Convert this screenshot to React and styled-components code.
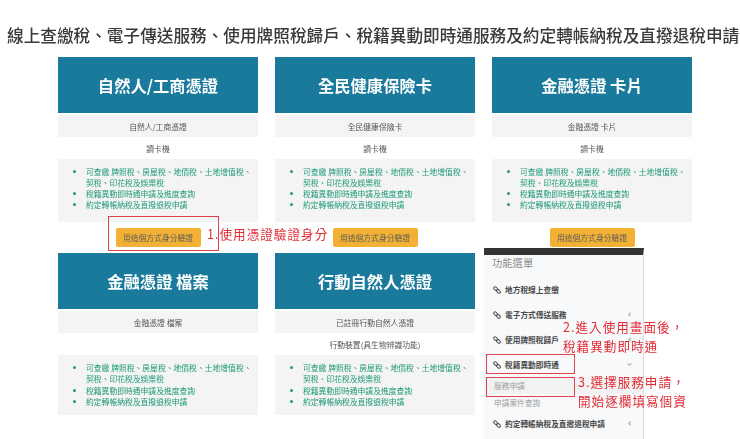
import React from 'react';
import styled, { createGlobalStyle } from 'styled-components';
import { FaAngleLeft, FaAngleDown } from 'react-icons/fa';

const Global = createGlobalStyle`
  html, body {
    margin: 0;
    padding: 0;
    background: #fff;
    overflow: hidden;
  }
  body {
    font-family: "Noto Sans CJK TC", "Noto Sans", sans-serif;
  }
`;

const Page = styled.div`
  position: relative;
  width: 740px;
  height: 439px;
  overflow: hidden;
  filter: blur(0.45px);
`;

const Title = styled.h1`
  margin: 0;
  padding: 24px 0 0 7px;
  height: 33px;
  font-size: 16.65px;
  line-height: 22px;
  font-weight: 500;
  color: #3a3a3a;
  white-space: nowrap;
`;

const Grid = styled.div`
  display: grid;
  grid-template-columns: repeat(3, 200px);
  column-gap: 17px;
  row-gap: 6px;
  padding-left: 58px;
`;

const Card = styled.div`
  display: flex;
  flex-direction: column;
  align-items: stretch;
`;

const Banner = styled.div`
  height: 56px;
  display: flex;
  align-items: center;
  justify-content: center;
  background: #1a7a9c;
  color: #fff;
  font-size: 16.3px;
  font-weight: 700;
`;

const Issuer = styled.div`
  margin-top: 2px;
  height: 22px;
  display: flex;
  align-items: center;
  justify-content: center;
  background: #f4f4f4;
  color: #555;
  font-size: 7.8px;
`;

const Device = styled.div`
  height: 22px;
  display: flex;
  align-items: center;
  justify-content: center;
  color: #555;
  font-size: 7.8px;
`;

const Features = styled.ul`
  margin: 0;
  padding: 7px 6px ${(p) => (p.$short ? 8 : 12)}px 28px;
  background: #f4f4f4;
  color: #1f9a78;
  font-size: 7.8px;
  line-height: 11.1px;
`;

const Verify = styled.button`
  align-self: center;
  margin-top: 6px;
  width: 85px;
  height: 19px;
  border: none;
  border-radius: 2px;
  padding: 0;
  background: #f2b134;
  color: #5c5c5c;
  font-family: inherit;
  font-size: 7.8px;
`;

const Menu = styled.aside`
  position: absolute;
  left: 484px;
  top: 248px;
  width: 160px;
  height: 191px;
  background: #f8f9fb;
  border-right: 1px solid #ddd;
  border-top: 7px solid #333;
  box-sizing: border-box;
`;

const MenuTitle = styled.div`
  padding-left: 8px;
  height: 22px;
  line-height: 16px;
  font-size: 10.3px;
  color: #8c8c8c;
`;

const MenuItem = styled.div`
  height: 25px;
  display: flex;
  align-items: center;
  padding: 0 10px 0 9px;
  color: #4a4a4a;
  font-size: 7.7px;
  font-weight: 700;
`;

const LinkIcon = styled.svg`
  width: 8px;
  height: 8px;
  margin-right: 4px;
  flex-shrink: 0;
  fill: none;
  stroke: #4a4a4a;
  stroke-width: 1.9;
`;

const Arrow = styled.span`
  margin-left: auto;
  display: flex;
  color: #aaa;
  font-size: 7px;
`;

const SubItem = styled.div`
  height: 17px;
  display: flex;
  align-items: center;
  padding-left: 10px;
  color: #a0a0a0;
  font-size: 7.7px;
  background: ${(p) => (p.$active ? '#f2f2f2' : 'transparent')};
`;

const Note = styled.div`
  position: absolute;
  left: ${(p) => p.$x}px;
  top: ${(p) => p.$y}px;
  color: #e42c36;
  font-size: 12.6px;
  font-weight: 400;
  line-height: 19px;
  letter-spacing: 1px;
  white-space: pre;
`;

const RedBox = styled.div`
  position: absolute;
  left: ${(p) => p.$x}px;
  top: ${(p) => p.$y}px;
  width: ${(p) => p.$w}px;
  height: ${(p) => p.$h}px;
  border: 1px solid #e0414c;
  box-sizing: border-box;
`;

const cards = [
  { name: '自然人/工商憑證', issuer: '自然人/工商憑證', device: '讀卡機', btn: true },
  { name: '全民健康保險卡', issuer: '全民健康保險卡', device: '讀卡機', btn: true },
  { name: '金融憑證 卡片', issuer: '金融憑證 卡片', device: '讀卡機', btn: true },
  { name: '金融憑證 檔案', issuer: '金融憑證 檔案', device: '' },
  { name: '行動自然人憑證', issuer: '已註冊行動自然人憑證', device: '行動裝置(具生物辨識功能)' },
];

const Chain = () => (
  <LinkIcon viewBox="0 0 16 16">
    <rect x="1" y="2.5" width="8.5" height="5.5" rx="2.7" transform="rotate(45 5.2 5.2)" />
    <rect x="6.5" y="8" width="8.5" height="5.5" rx="2.7" transform="rotate(45 10.8 10.8)" />
  </LinkIcon>
);

function App() {
  return (
    <Page>
      <Global />
      <Title>線上查繳稅、電子傳送服務、使用牌照稅歸戶、稅籍異動即時通服務及約定轉帳納稅及直撥退稅申請</Title>
      <Grid>
        {cards.map((c) => (
          <Card key={c.name}>
            <Banner>{c.name}</Banner>
            <Issuer>{c.issuer}</Issuer>
            <Device>{c.device}</Device>
            <Features $short={!c.btn}>
              <li>可查繳 牌照稅、房屋稅、地價稅、土地增值稅、契稅、印花稅及娛樂稅</li>
              <li>稅籍異動即時通申請及進度查詢</li>
              <li>約定轉帳納稅及直撥退稅申請</li>
            </Features>
            {c.btn && <Verify>用這個方式身分驗證</Verify>}
          </Card>
        ))}
      </Grid>

      <Menu>
        <MenuTitle>功能選單</MenuTitle>
        <MenuItem><Chain />地方稅線上查繳</MenuItem>
        <MenuItem><Chain />電子方式傳送服務<Arrow><FaAngleLeft /></Arrow></MenuItem>
        <MenuItem><Chain />使用牌照稅歸戶<Arrow><FaAngleLeft /></Arrow></MenuItem>
        <MenuItem><Chain />稅籍異動即時通<Arrow><FaAngleDown /></Arrow></MenuItem>
        <SubItem $active>服務申請</SubItem>
        <SubItem>申請案件查詢</SubItem>
        <MenuItem><Chain />約定轉帳納稅及直撥退稅申請<Arrow><FaAngleLeft /></Arrow></MenuItem>
      </Menu>

      <RedBox $x={108} $y={216} $w={111} $h={35} />
      <RedBox $x={486} $y={354} $w={89} $h={20} />
      <RedBox $x={486} $y={377} $w={89} $h={20} />

      <Note $x={207} $y={224}>1.使用憑證驗證身分</Note>
      <Note $x={563} $y={317}>{'2.進入使用畫面後，\n稅籍異動即時通'}</Note>
      <Note $x={578} $y={372}>{'3.選擇服務申請，\n開始逐欄填寫個資'}</Note>
    </Page>
  );
}

export default App;
